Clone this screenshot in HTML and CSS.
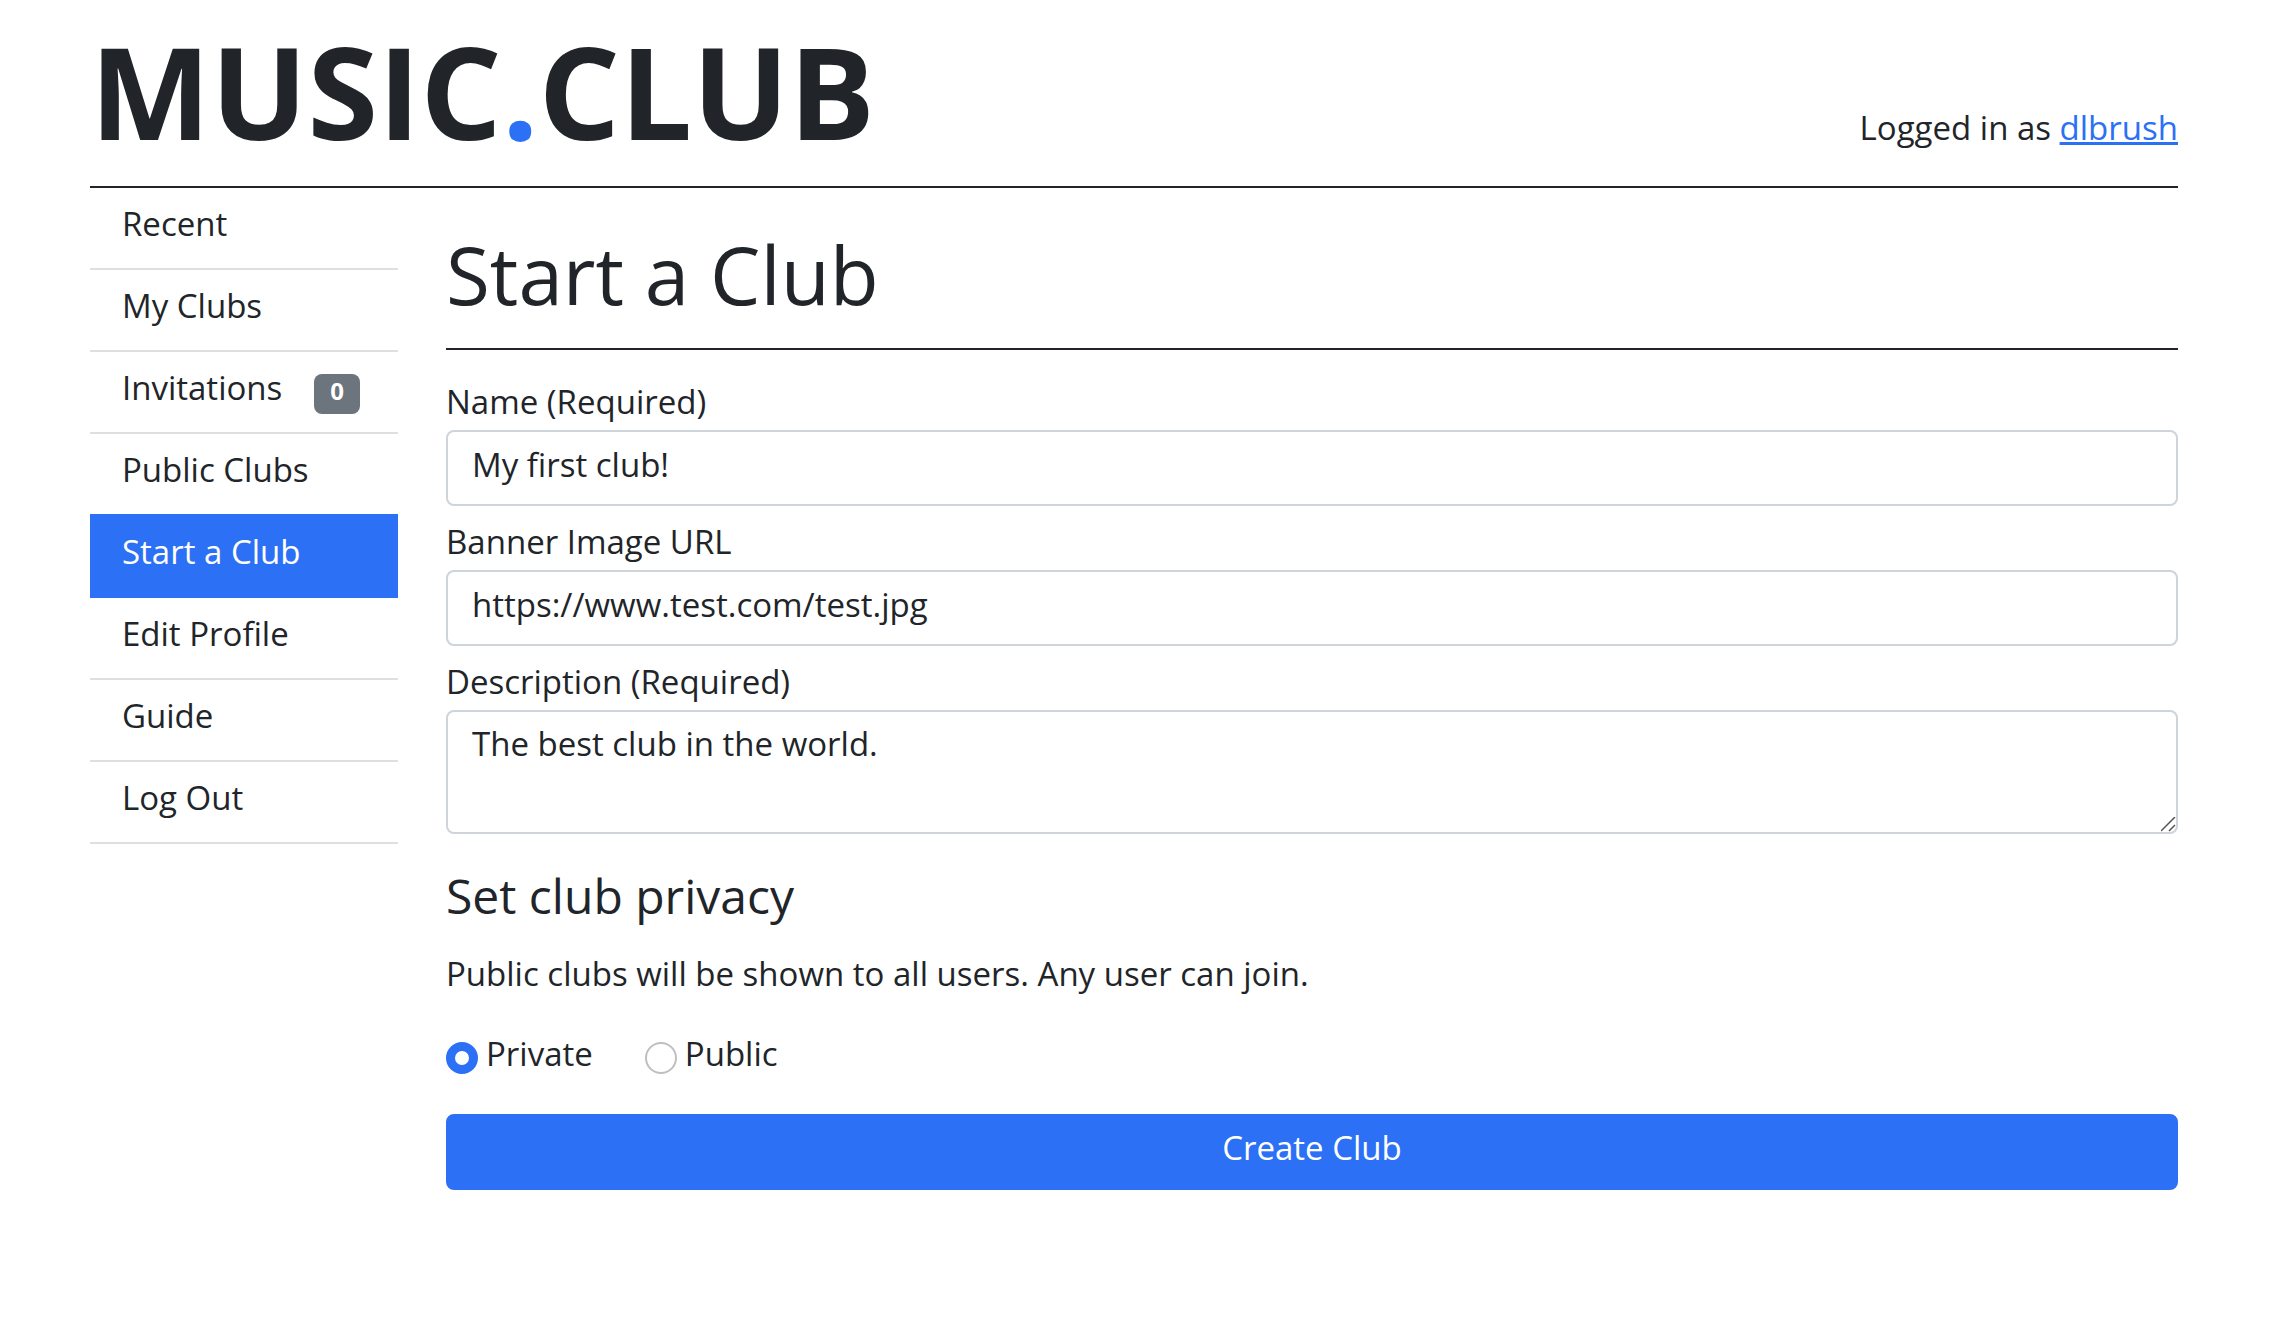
FILE: index.html
```html
<!DOCTYPE html>
<html lang="en">
<head>
  <meta charset="utf-8">
  <title>Start a Club - Music.Club</title>
  <link rel="stylesheet" href="styles.css">
</head>
<body>
  <header class="site-header">
    <div class="logo">MUSIC<span class="logo-dot">.</span>CLUB</div>
    <p class="session">Logged in as <a class="session-link" href="#">dlbrush</a></p>
  </header>
  <div class="layout">
    <nav class="sidebar">
      <a class="nav-item" href="#">Recent</a>
      <a class="nav-item" href="#">My Clubs</a>
      <a class="nav-item" href="#">Invitations <span class="badge">0</span></a>
      <a class="nav-item" href="#">Public Clubs</a>
      <a class="nav-item nav-item-active" href="#">Start a Club</a>
      <a class="nav-item" href="#">Edit Profile</a>
      <a class="nav-item" href="#">Guide</a>
      <a class="nav-item" href="#">Log Out</a>
    </nav>
    <main class="content">
      <h1 class="title">Start a Club</h1>
      <form class="club-form">
        <div class="field">
          <label for="name">Name (Required)</label>
          <input class="control" type="text" id="name" value="My first club!">
        </div>
        <div class="field">
          <label for="banner">Banner Image URL</label>
          <input class="control" type="text" id="banner" value="https://www.test.com/test.jpg">
        </div>
        <div class="field">
          <label for="description">Description (Required)</label>
          <textarea class="control control-area" id="description">The best club in the world.</textarea>
        </div>
        <h2 class="subtitle">Set club privacy</h2>
        <p class="hint">Public clubs will be shown to all users. Any user can join.</p>
        <div class="choices">
          <div class="choice">
            <input class="radio" type="radio" name="privacy" id="private" checked>
            <label for="private">Private</label>
          </div>
          <div class="choice">
            <input class="radio" type="radio" name="privacy" id="public">
            <label for="public">Public</label>
          </div>
        </div>
        <button class="submit" type="button">Create Club</button>
      </form>
    </main>
  </div>
</body>
</html>
```

FILE: styles.css
```css
* {
  box-sizing: border-box;
}

body {
  margin: 0;
  padding: 0 102px 64px 90px;
  background: #fff;
  color: #212529;
  font-family: "Open Sans", "Noto Sans", sans-serif;
  font-size: 33px;
  line-height: 40px;
}

.site-header {
  display: flex;
  justify-content: space-between;
  align-items: baseline;
  padding: 18px 0 22px;
  border-bottom: 2px solid #212529;
}

.logo {
  font-size: 128px;
  font-weight: 700;
  line-height: 146px;
}

.logo-dot,
.session-link {
  color: #2c70f5;
}

.session {
  margin: 0;
}

.layout {
  display: grid;
  grid-template-columns: 308px 1fr;
  gap: 48px;
  align-items: start;
}

.sidebar {
  display: flex;
  flex-direction: column;
}

.nav-item {
  display: flex;
  gap: 32px;
  padding: 16px 32px 24px;
  border-bottom: 2px solid #dedfe0;
  color: inherit;
  text-decoration: none;
}

.nav-item-active {
  margin-top: -2px;
  padding-top: 18px;
  border-color: #2c70f5;
  background: #2c70f5;
  color: #fff;
}

.badge {
  height: 40px;
  margin: 6px 0 -6px;
  padding: 0 16px;
  border-radius: 8px;
  background: #6c757d;
  color: #fff;
  font-size: 24px;
  font-weight: 700;
  line-height: 34px;
}

.title {
  margin: 0 0 32px;
  padding: 38px 0 26px;
  border-bottom: 2px solid #212529;
  font-size: 80px;
  font-weight: 400;
  line-height: 96px;
}

.field {
  display: flex;
  flex-direction: column;
  gap: 8px;
  margin-bottom: 16px;
}

.control {
  width: 100%;
  height: 76px;
  padding: 12px 24px 20px;
  border: 2px solid #ced4da;
  border-radius: 8px;
  background: #fff;
  color: inherit;
  font: inherit;
}

.control-area {
  height: 124px;
  resize: vertical;
}

.control-area::-webkit-resizer {
  background: url("data:image/svg+xml,%3Csvg xmlns='http://www.w3.org/2000/svg' width='15' height='15'%3E%3Cpath d='M0 14L14 0M8 14L14 8' stroke='%23555' stroke-width='1.5'/%3E%3C/svg%3E") no-repeat;
}

.subtitle {
  margin: 34px 0 30px;
  font-size: 48px;
  font-weight: 400;
  line-height: 56px;
}

.hint {
  margin: 0 0 40px;
}

.choices {
  display: flex;
  gap: 52px;
  margin-bottom: 40px;
}

.choice {
  display: flex;
  gap: 8px;
}

.radio {
  appearance: none;
  width: 32px;
  height: 32px;
  margin: 8px 0 0;
  border: 2px solid #bfbfbf;
  border-radius: 50%;
  background: #fff;
}

.radio:checked {
  border: 9px solid #2c70f5;
}

.submit {
  width: 100%;
  height: 76px;
  padding: 12px 24px 20px;
  border: 2px solid #2c70f5;
  border-radius: 8px;
  background: #2c70f5;
  color: #fff;
  font: inherit;
}
```
